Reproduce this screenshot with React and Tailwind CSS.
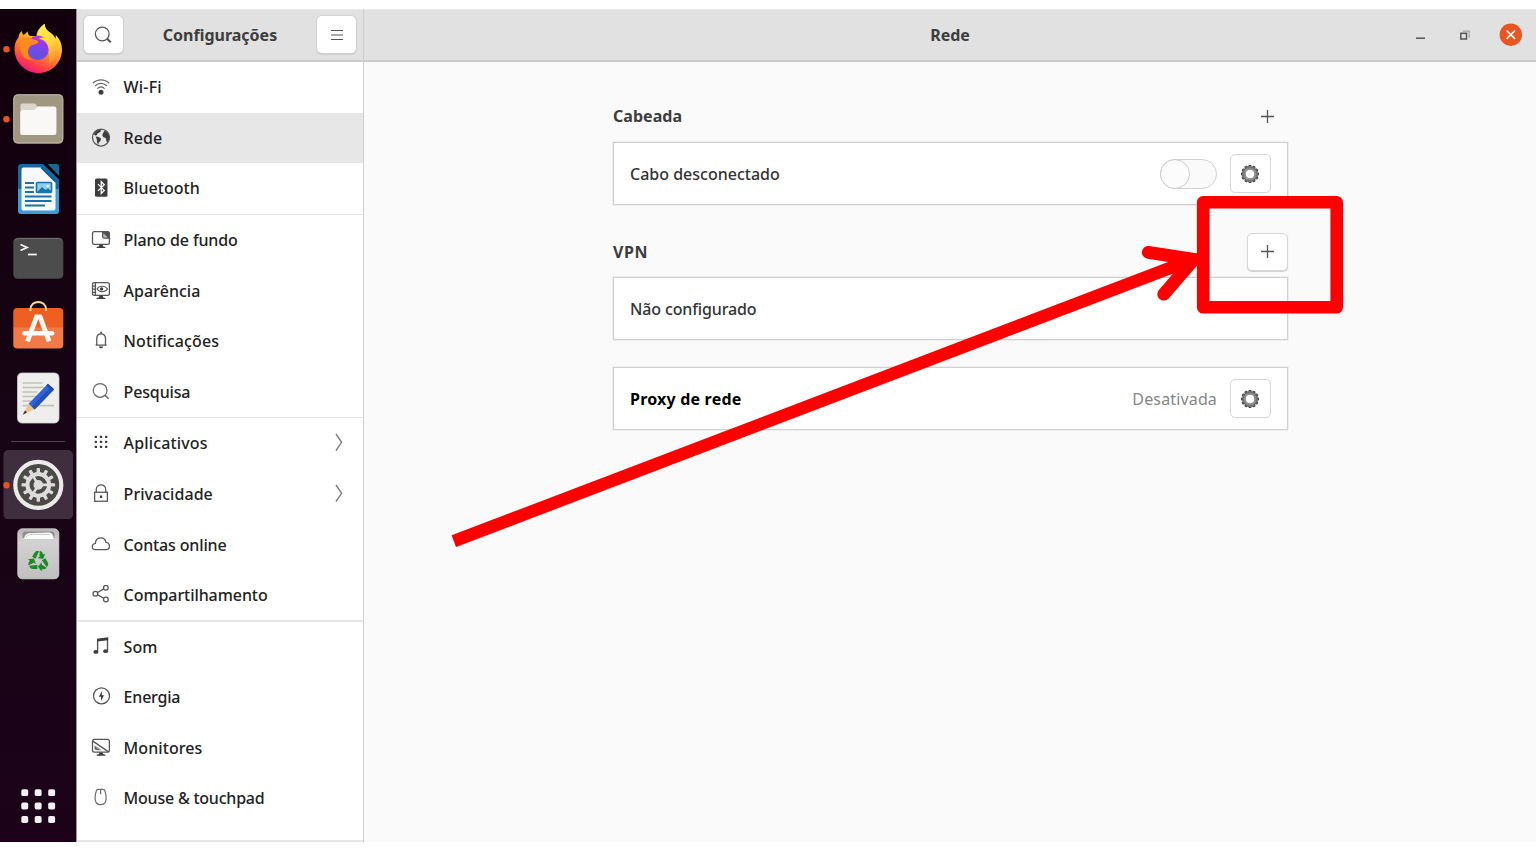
import React from "react";

/* ---------- Dock icons (76 x 69.75 tiles) ---------- */

function Tile({ children }) {
  return (
    <svg className="h-[69.75px] w-[76px] shrink-0" viewBox="0 0 76 69.75">
      {children}
    </svg>
  );
}

const RunningDot = () => <circle cx="6.5" cy="35.2" r="3.2" fill="#e95420" />;

function Firefox() {
  return (
    <Tile>
      <defs>
        <linearGradient id="ffBody" x1="0.75" y1="0.05" x2="0.3" y2="1">
          <stop offset="0" stopColor="#fff24a" />
          <stop offset="0.3" stopColor="#ffc02e" />
          <stop offset="0.58" stopColor="#ff7a2c" />
          <stop offset="0.8" stopColor="#ff4047" />
          <stop offset="1" stopColor="#ee0f87" />
        </linearGradient>
        <linearGradient id="ffOrb" x1="0.7" y1="0" x2="0.4" y2="1">
          <stop offset="0" stopColor="#b431e6" />
          <stop offset="0.5" stopColor="#7548e8" />
          <stop offset="1" stopColor="#5a55dc" />
        </linearGradient>
        <linearGradient id="ffTail" x1="0.3" y1="0" x2="0.6" y2="1">
          <stop offset="0" stopColor="#fff14a" />
          <stop offset="0.5" stopColor="#ffd83c" />
          <stop offset="1" stopColor="#ff8a30" />
        </linearGradient>
      </defs>
      <RunningDot />
      <path
        d="M14.500 35c0-5 1.500-8.500 4-11.500 0-2.500 1-5 3.600-6.600-.1 1.700.3 3 1.400 4 1.600-.6 2.600-1.600 4-3.600.2 2 1 3.600 2.400 4.700h6.600c.2-5 3.500-8.500 8-12.200 .3 5 3 7 6.500 9.500 2 1.500 3.500 3.500 4.500 6l.3-4.300c4 4 6.200 9 6.200 14.500C62 48.500 51.500 59 38.500 59S14.500 48.500 14.500 35z"
        fill="url(#ffBody)"
      />
      <path
        d="M37.500 23c0-6 3-9.500 7-13.200 .3 5 3 7 6.500 9.500 5.500 4 8 11.500 6 20.500-1.500 5-4.500 8-8.500 10 1.500-7 1-13-1.500-18-2-4-5-7-9.500-8.800z"
        fill="url(#ffTail)"
      />
      <circle cx="38" cy="35.500" r="10.600" fill="url(#ffOrb)" />
      <path
        d="M20.500 26c4-3 8-3 12-1.500 2.500.8 5 1.500 6 3.500-1.500 2.200-3.500 2.400-6 3-2 .6-3.500 1.800-4 4.200-1.800 4 0 8.500 4 10.800-6 .5-11.500-4-12.300-10.500-.3-3.500 0-6.500.3-9.500z"
        fill="#ff8a1f"
      />
      <path d="M31 24.200c3.500-2.800 9-3.200 13.500-.7-3-.2-5 .3-6.200 2-2.200.6-4.500.4-7.300-1.300z" fill="#b836e4" />
    </Tile>
  );
}

function Files() {
  return (
    <Tile>
      <RunningDot />
      <rect x="13.300" y="10.300" width="50" height="49.500" rx="4.500" fill="#9c937f" />
      <rect x="13.800" y="10.800" width="49" height="48" rx="4" fill="#a09783" stroke="#bcb4a0" strokeWidth="1" />
      <path d="M20.500 34V21.500c0-1.300.9-2 2-2h11.200c1.300 0 1.800.5 2.600 1.400l2.200 2.600V34z" fill="#dcd6ca" />
      <path d="M20.200 29c0-2 1-3 3-3h11l4-3.500h16c1.500 0 2.200.9 2.200 2.300v23.700q0 2.500-2.500 2.500h-31.200q-2.500 0-2.500-2.500z" fill="#f9f8f6" />
    </Tile>
  );
}

function Writer() {
  return (
    <Tile>
      <path d="M21.500 10h21.500l16 15.500v31q0 3.500-3.500 3.500h-34q-3.500 0-3.500-3.500v-43q0-3.500 3.500-3.500z" fill="#15699f" />
      <path d="M18 35h41v21.500q0 3.500-3.500 3.500h-34q-3.500 0-3.500-3.500z" fill="#3c9dd4" />
      <path d="M23.500 13.500h17.500l14.500 14.500v26.500q0 2-2 2h-30q-2 0-2-2v-39q0-2 2-2z" fill="#f7f8f9" />
      <path d="M47.500 10h8.500q3.200 0 3.200 3.200v8.800z" fill="#1c6792" />
      <path d="M41 13.500l14.500 14.500" stroke="#0e5888" strokeWidth="1.400" />
      <path d="M25 29h9M25 33.500h9M25 38h9M25 42.500h26.500M25 47h26.500M25 51.500h20" stroke="#1873a8" strokeWidth="2.200" />
      <rect x="36.500" y="28.500" width="15" height="10" rx="1" fill="#90ccec" stroke="#1873a8" strokeWidth="1.600" />
      <path d="M37.300 38l4.700-5 3.500 3 2.500-1.800 3 2.800v1z" fill="#1873a8" />
      <circle cx="47.800" cy="32" r="1.300" fill="#f7f8f9" />
    </Tile>
  );
}

function TerminalIcon() {
  return (
    <Tile>
      <rect x="13.300" y="14.800" width="50" height="41" rx="4.500" fill="#4c4c4c" />
      <path d="M15 17.300q1.500-1.800 3.500-1.800h40q2 0 3.500 1.800" stroke="#6d6d6d" strokeWidth="1" fill="none" />
      <path d="M20.500 21.500l6.500 3-6.500 3" stroke="#f1f1f1" strokeWidth="1.900" fill="none" />
      <path d="M28 31.500h8.800" stroke="#f1f1f1" strokeWidth="1.800" />
    </Tile>
  );
}

function Store() {
  return (
    <Tile>
      <g transform="translate(0 -2.600)">
        <path d="M13.300 21.500q0-4 4-4h42q4 0 4 4v16h-50z" fill="#ee5f22" />
        <path d="M13.300 37h50v17q0 4-4 4h-42q-4 0-4-4z" fill="#f27a46" />
        <path d="M30.500 20.500v-1.500c0-10 15.500-10 15.500 0v1.500" stroke="#f4d9a4" strokeWidth="2" fill="none" />
        <path d="M27.500 51l9-24.500h3.600l9 24.500" stroke="#fff6f0" strokeWidth="4.800" fill="none" />
        <path d="M24.500 42.800h27.500" stroke="#ffffff" strokeWidth="4.600" strokeLinecap="round" />
      </g>
    </Tile>
  );
}

function Editor() {
  return (
    <Tile>
      <rect x="17.500" y="10" width="41.500" height="50" rx="4.500" fill="#eeeeec" stroke="#cfcfcf" strokeWidth="0.800" />
      <path d="M22.500 20h20M22.500 24.500h24M22.500 29h15M22.500 33.500h15M22.500 38h9M22.500 42.700h31.500" stroke="#c3c1b5" strokeWidth="1.700" />
      <path d="M29 40.500l-6 11 11.500-5.500z" fill="#f5c17b" />
      <path d="M25 47.500l-2.300 4.200 4.300-2.100z" fill="#30343a" />
      <path d="M28.600 40.800l19.400-20 6 5.600-19.300 20z" fill="#2f63d6" />
      <path d="M32 43.600l19.500-20 2.500 2.800-19.300 20z" fill="#2250b8" />
      <path d="M46.200 22.500l1.800-1.800 6 5.700-1.700 1.800z" fill="#274a9e" />
    </Tile>
  );
}

const COG_TEETH = [0, 30, 60, 90, 120, 150, 180, 210, 240, 270, 300, 330];

function SettingsApp() {
  return (
    <Tile>
      <rect x="3.500" y="0" width="69.500" height="69.500" rx="5" fill="#3f2f3e" />
      <RunningDot />
      <circle cx="38.300" cy="34.900" r="23" fill="#4b4a49" stroke="#ecebea" strokeWidth="4.200" />
      <g transform="translate(38.300 34.900)">
        {COG_TEETH.map((a) => (
          <rect key={a} x="-1.700" y="-16.800" width="3.400" height="6" rx="0.800" fill="#dddcda" transform={`rotate(${a})`} />
        ))}
        <circle r="10.800" fill="none" stroke="#dddcda" strokeWidth="4" />
        <path d="M0 0L10 0M0 0L-5 -8.600M0 0L-5 8.600" stroke="#dddcda" strokeWidth="2.600" />
        <circle r="4.800" fill="#dddcda" />
      </g>
    </Tile>
  );
}

function Trash() {
  return (
    <Tile>
      <defs>
        <linearGradient id="trashBody" x1="0" y1="0" x2="0" y2="1">
          <stop offset="0" stopColor="#b4b4b4" />
          <stop offset="0.25" stopColor="#d2d2d2" />
          <stop offset="1" stopColor="#bfbfbf" />
        </linearGradient>
      </defs>
      <rect x="17.800" y="9.800" width="41" height="50" rx="4.500" fill="url(#trashBody)" stroke="#d8d8d8" strokeWidth="0.800" />
      <path d="M22.500 19v-3.500q0-3 3-3h26q3 0 3 3v3.500z" fill="#8f8f8f" />
      <path d="M24 20c.5-4.500 3-6 8-6l16-.5c4 0 5.500 2.500 5.700 6.500z" fill="#fafafa" />
      <path d="M26 18c2-2.600 5-2.600 9-2.600h15" stroke="#c4c4c4" strokeWidth="0.900" fill="none" />
      <g transform="translate(38.300 42.400)">
        {[0, 120, 240].map((a) => (
          <g key={a} transform={`rotate(${a})`} fill="#1e8a24">
            <path d="M-6.200 -4.600L-3.600 -9Q-2.800 -10.300 -1.200 -10.300L0.800 -10.300L-2.700 -2.600Z" />
            <path d="M1.400 -10.300Q3.100 -10.300 4 -8.900L5.100 -6.900L7 -8L4.800 -2.300L-1 -3.300L1.100 -4.500Z" />
          </g>
        ))}
      </g>
    </Tile>
  );
}

function Dock() {
  return (
    <nav className="flex w-[76px] shrink-0 flex-col bg-linear-to-b from-[#12000c] via-[#170414] to-[#1b0219] pt-[5px]">
      <Firefox />
      <Files />
      <Writer />
      <TerminalIcon />
      <Store />
      <Editor />
      <div className="flex h-[17px] shrink-0 items-center pl-[11px]">
        <div className="h-px w-[54px] bg-[#51434f]" />
      </div>
      <SettingsApp />
      <Trash />
      <svg className="mt-auto mb-[18px] ml-[21px] size-[35px]" viewBox="0 0 35 35" fill="#f3f1f3">
        {[0.300, 13.700, 27.200].map((x) =>
          [0.200, 13.600, 27].map((y) => (
            <rect key={`${x}-${y}`} x={x} y={y} width="6.900" height="6.900" rx="1.700" />
          ))
        )}
      </svg>
    </nav>
  );
}

/* ---------- Symbolic icons (16-unit grid) ---------- */

function Sym({ children, className = "size-5" }) {
  return (
    <svg
      className={`shrink-0 ${className}`}
      viewBox="0 0 16 16"
      fill="none"
      stroke="#555"
      strokeWidth="1"
    >
      {children}
    </svg>
  );
}

const F = "#3d3d3d";

const icons = {
  wifi: (
    <Sym>
      <path d="M1.400 5C5.200 1.300 10.800 1.300 14.600 5M3.200 7.200c2.800-2.700 6.800-2.700 9.600 0M5.100 9.300c1.700-1.600 4.100-1.600 5.800 0" stroke="#666" />
      <circle cx="8" cy="12.200" r="2" fill={F} stroke="none" />
    </Sym>
  ),
  globe: (
    <Sym>
      <circle cx="8" cy="7.600" r="6.800" />
      <path d="M2.200 4.800L4.600 2l3-.9L8 2.500 6.700 3.500 5 4.300 4.900 5.500 3.300 6z" fill={F} stroke="none" />
      <path d="M3.800 6.800l2.400.3 1.900 1.500-.6 1.700-1.300 1.200-.4 2-1-2.200-.1-1.900z" fill={F} stroke="none" />
      <path d="M9.400 4.500l1.300-2.300 2 .9 1.700 2.900.2 2.900-1.900 2.800-.9-3.700-1.900-.7-.9-1.500z" fill={F} stroke="none" />
    </Sym>
  ),
  bluetooth: (
    <Sym>
      <rect x="3.200" y="0.300" width="10" height="14.600" rx="1.200" fill={F} stroke="none" />
      <path d="M5.600 4.900l5 5L8.200 12.300V2.900l2.400 2.500-5 4.900" stroke="#fff" strokeWidth="1" />
    </Sym>
  ),
  background: (
    <Sym>
      <rect x="1.200" y="1.300" width="13.500" height="10.200" rx="1.500" />
      <path d="M9.300 1.500v3.700q0 1.300 1.300 1.300h4L9.300 1.500z" fill="#bbb" />
      <path d="M10 1.500l4.500 4.300V3q0-1.500-1.500-1.500z" fill="#4a4a4a" />
      <path d="M4.500 14.400h7v-.8l-2-.6v-1.300h-3V13l-2 .6z" fill={F} stroke="none" />
    </Sym>
  ),
  appearance: (
    <Sym>
      <rect x="1.200" y="1.300" width="13.500" height="10.200" rx="1.500" />
      <path d="M3.500 1.500v10M1.300 4h2M1.300 6.500h2M1.300 9h2" />
      <path d="M4.800 6.400c2-2.900 6.400-2.900 8.400 0-2 2.900-6.400 2.900-8.400 0z" strokeWidth="0.900" />
      <circle cx="8.500" cy="6.300" r="1.300" fill={F} stroke="none" />
      <path d="M4.500 14.400h7v-.8l-2-.6v-1.300h-3V13l-2 .6z" fill={F} stroke="none" />
    </Sym>
  ),
  bell: (
    <Sym>
      <path d="M3.700 11.200h8.800M4.600 11V5.900c0-4.900 7-4.900 7 0V11" />
      <path d="M8.100 .6v1.500" strokeWidth="1.500" />
      <path d="M6.300 12.300h3.400q-.3 1.500-1.700 1.500t-1.700-1.500z" fill={F} stroke="none" />
    </Sym>
  ),
  search: (
    <Sym>
      <circle cx="7.300" cy="6.700" r="5.500" stroke="#6b6b6b" />
      <path d="M11.100 10.500l3 2.900" stroke="#6b6b6b" strokeWidth="1.300" />
    </Sym>
  ),
  apps: (
    <Sym>
      {[3, 7.100, 11.200].map((x) =>
        [2.200, 6.200, 10.200].map((y) => (
          <rect key={`${x}-${y}`} x={x} y={y} width="1.800" height="1.800" rx="0.400" fill={F} stroke="none" />
        ))
      )}
    </Sym>
  ),
  lock: (
    <Sym>
      <rect x="2.900" y="6.600" width="10.200" height="7.200" />
      <path d="M4.200 6.600V4.400c0-5 7.600-5 7.600 0v2.200" />
      <rect x="7.200" y="9.200" width="1.700" height="2" fill={F} stroke="none" />
    </Sym>
  ),
  cloud: (
    <Sym>
      <path d="M3.800 11.700c-3.700 0-3.600-4.700-.3-4.900.3-5.700 7.600-5.800 8.500-.9 3.700.5 3.600 5.800.1 5.800z" />
    </Sym>
  ),
  share: (
    <Sym>
      <circle cx="3.500" cy="6.900" r="1.900" />
      <circle cx="11.900" cy="2.200" r="1.900" />
      <circle cx="11.900" cy="11.500" r="1.900" />
      <path d="M5.300 6l4.900-2.900M5.300 7.900l4.900 2.700" />
    </Sym>
  ),
  music: (
    <Sym>
      <path d="M5.300 11.600V2.200l7.900-1v9.600" strokeWidth="1.100" />
      <path d="M4.800 1.400L13.700.2v2.300L4.800 3.600z" fill={F} stroke="none" />
      <ellipse cx="3.900" cy="11.900" rx="2" ry="1.500" fill={F} stroke="none" />
      <ellipse cx="11.700" cy="11.300" rx="2" ry="1.500" fill={F} stroke="none" />
    </Sym>
  ),
  power: (
    <Sym>
      <circle cx="8.400" cy="7.100" r="6.400" />
      <path d="M8.700 3.300L6.300 7.700h1.700l-.1 3.600 2.500-4.700H8.700z" fill={F} stroke="none" />
    </Sym>
  ),
  display: (
    <Sym>
      <rect x="1.200" y="1.100" width="13.500" height="10.200" rx="1.500" />
      <path d="M1.500 2.500l12.500 8.600" />
      <path d="M2.700 5.500l6 4.200H4.200q-1.500 0-1.500-1.500z" fill="#999" stroke="none" />
      <path d="M3.700 7.200v1.400l2.600.8" strokeWidth="0.800" />
      <path d="M4.500 14.200h7v-.8l-2-.6v-1.300h-3v1.300l-2 .6z" fill={F} stroke="none" />
    </Sym>
  ),
  mouse: (
    <Sym>
      <path d="M4.400 1.900q.5-.9 1.700-.9h3.200q1.200 0 1.700.9c1.500 4.500 1.700 7 .4 9.600-1.400 2.500-6 2.500-7.400 0-1.300-2.600-1.100-5.100.4-9.600z" stroke="#707070" />
      <path d="M7.700 1.200v3.700" stroke="#707070" />
    </Sym>
  ),
};

/* ---------- Sidebar ---------- */

const groups = [
  [
    { icon: "wifi", label: "Wi-Fi", track: "tracking-[0.2px]" },
    { icon: "globe", label: "Rede", track: "tracking-[0.1px]", active: true },
    { icon: "bluetooth", label: "Bluetooth", track: "tracking-[0.05px]" },
  ],
  [
    { icon: "background", label: "Plano de fundo", track: "tracking-[-0.13px]" },
    { icon: "appearance", label: "Aparência", track: "tracking-[0.02px]" },
    { icon: "bell", label: "Notificações", track: "tracking-[0.1px]" },
    { icon: "search", label: "Pesquisa", track: "tracking-[-0.15px]" },
  ],
  [
    { icon: "apps", label: "Aplicativos", track: "tracking-[0.14px]", more: true },
    { icon: "lock", label: "Privacidade", track: "tracking-[0.04px]", more: true },
    { icon: "cloud", label: "Contas online", track: "tracking-[-0.15px]" },
    { icon: "share", label: "Compartilhamento", track: "tracking-[-0.07px]" },
  ],
  [
    { icon: "music", label: "Som", track: "tracking-[0px]" },
    { icon: "power", label: "Energia", track: "tracking-[-0.2px]" },
    { icon: "display", label: "Monitores", track: "tracking-[0.08px]" },
    { icon: "mouse", label: "Mouse & touchpad", track: "tracking-[-0.22px]" },
  ],
];

function Row({ icon, label, track, active, more }) {
  return (
    <li className={`flex h-[50.550px] shrink-0 items-center pl-[14px] pr-5 ${active ? "bg-[#e7e7e7]" : ""}`}>
      {icons[icon]}
      <span className={`ml-[12.600px] flex-1 font-medium ${track}`}>{label}</span>
      {more && (
        <svg className="h-5 w-2" viewBox="0 0 8 20" fill="none" stroke="#7d7d7d" strokeWidth="1.400">
          <path d="M1 1l5.600 8.300L1 17.500" />
        </svg>
      )}
    </li>
  );
}

function Sidebar() {
  return (
    <aside className="flex w-[288px] shrink-0 flex-col border-r border-l border-r-[#cdcdcd] border-l-[#9a949b] bg-white">
      <header className="flex h-[53px] shrink-0 items-center justify-between border-b-2 border-t border-t-[#ebebeb] border-b-[#cbcbcb] bg-[#e1e1e1] px-[7px] pb-px">
        <button className="flex h-[37px] w-[39px] items-center justify-center rounded-[5px] bg-white shadow-[0_0_0_1px_#d2d2d2,0_1px_1px_1px_#cccccc]">
          <Sym className="mr-px size-5">
            <circle cx="7.400" cy="7.200" r="5.500" />
            <path d="M11.200 11l3 2.800" strokeWidth="1.700" />
          </Sym>
        </button>
        <h1 className="font-bold text-[#3d3d3d]">Configurações</h1>
        <button className="flex h-[37px] w-[39px] items-center justify-center rounded-[5px] bg-white shadow-[0_0_0_1px_#d2d2d2,0_1px_1px_1px_#cccccc]">
          <svg className="h-3 w-3" viewBox="0 0 12 12" stroke="#555" strokeWidth="1.200">
            <path d="M0 1.500h12M0 6h12M0 10.500h12" />
          </svg>
        </button>
      </header>
      <ul className="flex min-h-0 flex-1 flex-col">
        {groups.map((g, i) => (
          <React.Fragment key={i}>
            {i > 0 && <li className="h-[1.200px] shrink-0 bg-[#e6e6e6]" />}
            {g.map((r) => (
              <Row key={r.label} {...r} />
            ))}
          </React.Fragment>
        ))}
        <li className="mt-auto h-[1.500px] shrink-0 bg-[#e6e6e6]" />
      </ul>
    </aside>
  );
}

/* ---------- Main panel ---------- */

function GearButton() {
  return (
    <button className="flex h-[39px] w-[41px] items-center justify-center rounded-[5px] border border-[#d6d6d6] bg-white">
      <svg className="size-5" viewBox="-10 -10 20 20">
        {COG_TEETH.map((a) => (
          <rect key={a} x="-1.500" y="-9" width="3" height="2.400" rx="0.700" fill="#444" transform={`rotate(${a})`} />
        ))}
        <circle r="6.600" fill="none" stroke="#8a8a8a" strokeWidth="2.600" />
        <circle r="7.200" fill="none" stroke="#5a5a5a" strokeWidth="0.900" />
        <circle r="4.900" fill="#fff" stroke="#5e5e5e" strokeWidth="0.900" />
      </svg>
    </button>
  );
}

const Plus = () => (
  <svg className="size-[13px]" viewBox="0 0 13 13" stroke="#555" strokeWidth="1.300">
    <path d="M6.500 0v13M0 6.500h13" />
  </svg>
);

const Card = ({ children }) => (
  <div className="flex h-[63px] items-center border border-[#d0d0d0] bg-white px-4 shadow-[0_0_0_0.500px_#e2e2e2]">
    {children}
  </div>
);

function Main() {
  return (
    <main className="flex min-w-0 flex-1 flex-col bg-[#fafafa]">
      <header className="flex h-[53px] shrink-0 items-center border-b-2 border-t border-t-[#ebebeb] border-b-[#cbcbcb] bg-[#e1e1e1] pb-px">
        <h2 className="flex-1 pl-[131px] text-center font-bold text-[#3d3d3d]">Rede</h2>
        <div className="flex w-[131px] items-center">
          <svg className="h-6 w-[105px] shrink-0" viewBox="0 0 105 24" fill="none">
            <path d="M11 15.200h9" stroke="#555" strokeWidth="1.500" />
            <path d="M57.700 8.200h6.500v6.500" stroke="#a5a5a5" strokeWidth="1.200" />
            <rect x="55.800" y="10.300" width="5.700" height="5.700" stroke="#555" strokeWidth="1.500" />
          </svg>
          <svg className="-ml-[11px] size-[23px] shrink-0" viewBox="0 0 23 23">
            <circle cx="11.800" cy="11.700" r="11.200" fill="#e95420" />
            <path d="M7.600 7.500l8.400 8.400M16 7.500l-8.400 8.400" stroke="#fff" strokeWidth="1.600" />
          </svg>
        </div>
      </header>

      <div className="mx-auto flex w-[675px] flex-col pt-8">
        <div className="flex h-[44px] items-center justify-between pl-[0.500px]">
          <h3 className="font-bold tracking-[0.05px] text-[#3d3d3d]">Cabeada</h3>
          <button className="mr-3.5"><Plus /></button>
        </div>
        <div className="mt-1">
          <Card>
            <span className="flex-1 pl-[0.500px] font-medium text-[#333]">Cabo desconectado</span>
            <span className="mr-[13px] flex h-[30px] w-[57px] rounded-full border border-[#d0d0d0] bg-[#fafafa]">
              <span className="-mt-px -ml-px size-[30px] rounded-full border border-[#cbcbcb] bg-[#fcfcfc]" />
            </span>
            <GearButton />
          </Card>
        </div>

        <div className="mt-6 flex h-[45px] items-center justify-between pl-[0.500px]">
          <h3 className="font-bold tracking-[0.55px] text-[#3d3d3d]">VPN</h3>
          <button className="flex h-[38px] w-[41px] items-center justify-center rounded-[5px] border border-[#d6d6d6] bg-white shadow-[0_1px_1px_#cfcfcf]">
            <Plus />
          </button>
        </div>
        <div className="mt-[3px]">
          <Card>
            <span className="pl-[0.500px] font-medium tracking-[-0.13px] text-[#333]">Não configurado</span>
          </Card>
        </div>

        <div className="mt-[27px]">
          <Card>
            <span className="flex-1 pl-[0.500px] font-bold tracking-[0.2px] text-black">Proxy de rede</span>
            <span className="mr-[12.500px] tracking-[0.150px] text-[#868686]">Desativada</span>
            <GearButton />
          </Card>
        </div>
      </div>
    </main>
  );
}

/* Red callout: a frame round the VPN add button and an arrow that points at it */
function Callout() {
  return (
    <svg
      className="pointer-events-none absolute inset-0 h-[864px] w-[1536px]"
      viewBox="0 0 1536 864"
      fill="none"
      stroke="#ff0000"
    >
      <path d="M453.800 541.200L1188 261.200" strokeWidth="12.500" />
      <path d="M1148.300 252.300L1194 259.300L1163.700 294.200" strokeWidth="12.800" strokeLinecap="round" />
      <rect x="1203.200" y="202.300" width="133.500" height="105" strokeWidth="12.600" strokeLinejoin="round" />
    </svg>
  );
}

export default function App() {
  return (
    <div className="relative h-[864px] w-[1536px] overflow-hidden bg-white pt-[9px] font-['Noto_Sans',sans-serif] text-[16px] leading-6 text-[#222]">
      <div className="flex h-[832.500px]">
        <Dock />
        <Sidebar />
        <Main />
      </div>
      <Callout />
    </div>
  );
}
